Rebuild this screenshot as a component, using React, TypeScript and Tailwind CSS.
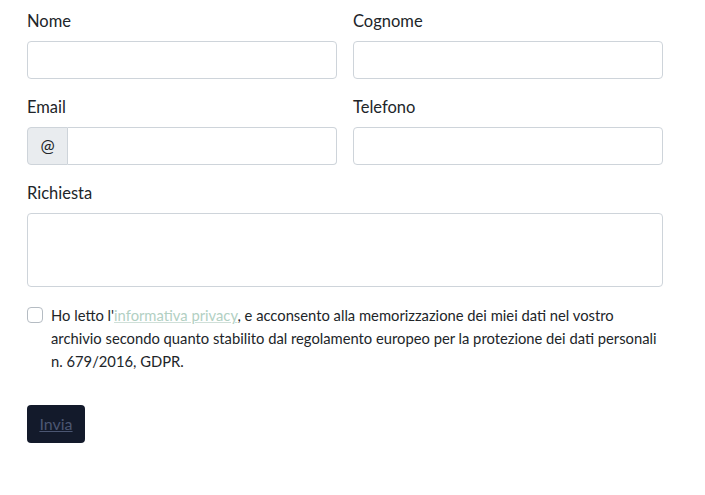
import React from "react";

const font = { fontFamily: "Lato, 'Noto Sans', sans-serif" };

function Label({ children }: { children: React.ReactNode }) {
  return <div className="text-[16.5px] leading-[24px] text-[#212529] mt-[1px] mb-[8px]">{children}</div>;
}

export default function App() {
  return (
    <div className="bg-white w-[705px] h-[495px] pt-[8px] px-[27px]" style={font}>
      <div className="w-[636px] flex flex-col">
        <div className="grid grid-cols-2 gap-x-[16px]">
          <div>
            <Label>Nome</Label>
            <input className="block w-full h-[38px] border border-[#ced4da] rounded-[4px] bg-white" />
          </div>
          <div>
            <Label>Cognome</Label>
            <input className="block w-full h-[38px] border border-[#ced4da] rounded-[4px] bg-white" />
          </div>
        </div>
        <div className="grid grid-cols-2 gap-x-[16px] mt-[15px]">
          <div>
            <Label>Email</Label>
            <div className="flex h-[38px]">
              <span className="w-[41px] flex items-center justify-center bg-[#e9ecef] border border-[#ced4da] rounded-l-[4px] text-[17px] text-[#212529]">@</span>
              <input className="flex-1 min-w-0 h-full border border-l-0 border-[#ced4da] rounded-r-[4px] bg-white" />
            </div>
          </div>
          <div>
            <Label>Telefono</Label>
            <input className="block w-full h-[38px] border border-[#ced4da] rounded-[4px] bg-white" />
          </div>
        </div>
        <div className="mt-[15px]">
          <Label>Richiesta</Label>
          <textarea className="block w-full h-[74px] border border-[#ced4da] rounded-[4px] bg-white resize-none" />
        </div>
        <div className="flex mt-[17px] gap-[8px]">
          <span className="mt-[3px] w-[16px] h-[16px] shrink-0 border border-[#b5bcc3] rounded-[4px] bg-white" />
          <p className="text-[14.75px] leading-[23px] text-[#212529] whitespace-nowrap">
            Ho letto l'<a className="text-[#b2d0c3] underline decoration-[#cfdfd8]">informativa privacy</a>, e acconsento alla memorizzazione dei miei dati nel vostro
            <br />
            archivio secondo quanto stabilito dal regolamento europeo per la protezione dei dati personali
            <br />
            n. 679/2016, GDPR.
          </p>
        </div>
        <div className="mt-[32px]">
          <button className="h-[38px] w-[58px] rounded-[4px] bg-[#131a2b] text-[#4b5672] text-[16px] underline">Invia</button>
        </div>
      </div>
    </div>
  );
}
